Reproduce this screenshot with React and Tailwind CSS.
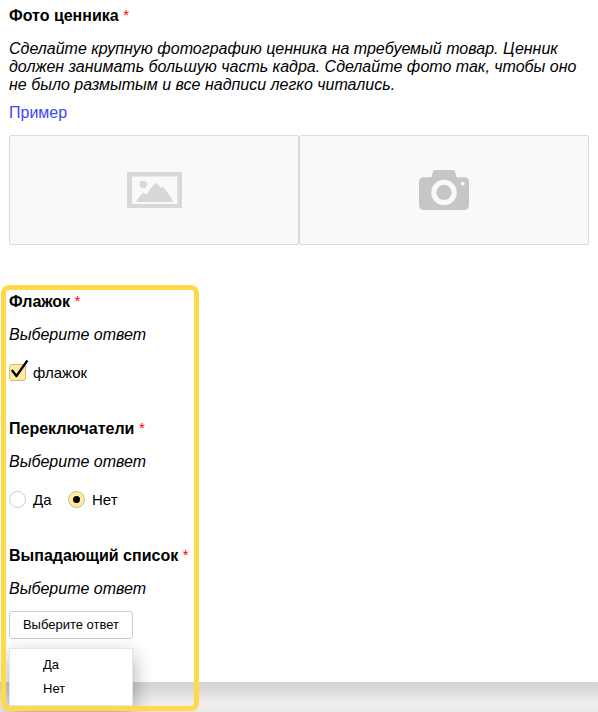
function Title({ children }) {
  return (
    <h2 className="h-[18px] whitespace-pre text-[16px] font-bold leading-[18px]">
      {children} <span className="align-[1px] text-[15px] font-normal leading-none text-[#ff0000]">*</span>
    </h2>
  );
}

function Hint() {
  return <p className="mt-[15px] h-[18px] text-[16px] italic leading-[18px]">Выберите ответ</p>;
}

function ImageIcon() {
  return (
    <svg width="55" height="36" viewBox="0 0 55 36" fill="#d8d8d8">
      <path fillRule="evenodd" d="M0 0H55V36H0ZM5 4.6V32H50.4V4.6Z" />
      <circle cx="16.3" cy="12.4" r="3.7" />
      <path d="M9 30C11 26 14 22.5 16.5 20.5L19.5 22.7C22 18.5 25.5 13.5 29 10.7L34 16L35.3 14.5C40 18.5 44 25 46 30Z" />
    </svg>
  );
}

function CameraIcon() {
  return (
    <svg width="50" height="40" viewBox="0 0 50 40" fill="#c6c6c6">
      <path
        fillRule="evenodd"
        d="M16 0H34Q35.5 0 36 1.5L37.7 7.3H45Q50 7.3 50 12.3V35Q50 40 45 40H5Q0 40 0 35V12.3Q0 7.3 5 7.3H12.3L14 1.5Q14.5 0 16 0ZM25 9.7A12.7 12.7 0 1 0 25 35.1A12.7 12.7 0 1 0 25 9.7ZM43.8 11.8A1.9 1.9 0 1 0 43.8 15.6A1.9 1.9 0 1 0 43.8 11.8Z"
      />
      <circle cx="25" cy="22.4" r="7.7" />
    </svg>
  );
}

export default function App() {
  return (
    <main className="relative flex h-[712px] w-[598px] flex-col overflow-hidden bg-white font-['Liberation_Sans',Arial,sans-serif] text-black">
      <section className="pl-[9px] pt-[7px]">
        <Title>Фото ценника</Title>
        <p className="mt-[15px] whitespace-nowrap text-[16px] italic leading-[18px]">
          Сделайте крупную фотографию ценника на требуемый товар. Ценник
          <br />
          должен занимать большую часть кадра. Сделайте фото так, чтобы оно
          <br />
          не было размытым и все надписи легко читались.
        </p>
        <a className="mt-[10px] block text-[16px] leading-[18px] text-[#3d48ee]">Пример</a>
        <div className="mt-[13px] flex">
          <button className="flex h-[110px] w-[290px] items-center justify-center rounded-[2px] border border-[#dadada] bg-[#f9f9f9]">
            <ImageIcon />
          </button>
          <button className="flex h-[110px] w-[290px] items-center justify-center rounded-[2px] border border-[#dadada] bg-[#f9f9f9]">
            <CameraIcon />
          </button>
        </div>
      </section>

      <section className="mt-[48px] h-[127px] pl-[9px]">
        <Title>Флажок</Title>
        <Hint />
        <label className="mt-[19px] flex h-[20px] items-center text-[15px] leading-[18px]">
          <svg className="mr-[4px] overflow-visible" width="20" height="20" viewBox="0 0 20 20" fill="none">
            <rect x="0.5" y="1.5" width="16" height="16" rx="2.5" fill="#ffeba0" stroke="#ccbc80" />
            <path d="M2.8 7L7.4 13L18.4 -2.5" stroke="#000" strokeWidth="2.3" strokeLinejoin="round" />
          </svg>
          флажок
        </label>
      </section>

      <section className="h-[127px] pl-[9px]">
        <Title>Переключатели</Title>
        <Hint />
        <div className="mt-[20px] flex h-[18px] items-start text-[15px] leading-[18px]">
          <label className="flex w-[59px] items-start">
            <span className="mr-[7px] size-[17px] rounded-full border border-[#ccc] bg-white" />
            Да
          </label>
          <label className="flex items-start">
            <span className="mr-[7px] flex size-[17px] items-center justify-center rounded-full border border-[#ccbc80] bg-[#ffeba0]">
              <span className="size-[7px] rounded-full bg-black" />
            </span>
            Нет
          </label>
        </div>
      </section>

      <section className="h-[135px] shrink-0 pl-[9px]">
        <Title>Выпадающий список</Title>
        <Hint />
        <button className="mt-[13px] flex h-[28px] w-[124px] items-center justify-center rounded-[3px] border border-[#ccc] bg-white text-[13px] leading-[16px]">
          Выберите ответ
        </button>
      </section>

      <footer className="h-[30px] shrink-0 bg-[linear-gradient(to_bottom,#d5d4d2_0px,#d9d8d6_6px,#eeedeb_20px,#f0efed_25px,#e8e8e7_30px)]" />

      <ul className="absolute left-[9px] top-[648px] h-[58px] w-[124px] border border-[#e5e5e5] bg-white pl-[33px] pt-[4px] text-[13px] leading-[24px] shadow-[0_8px_20px_rgba(0,0,0,0.35)]">
        <li>Да</li>
        <li>Нет</li>
      </ul>
      <div className="pointer-events-none absolute left-[1px] top-[285px] h-[426px] w-[198px] rounded-[8px] border-[5px] border-[#ffd94a]" />
    </main>
  );
}
